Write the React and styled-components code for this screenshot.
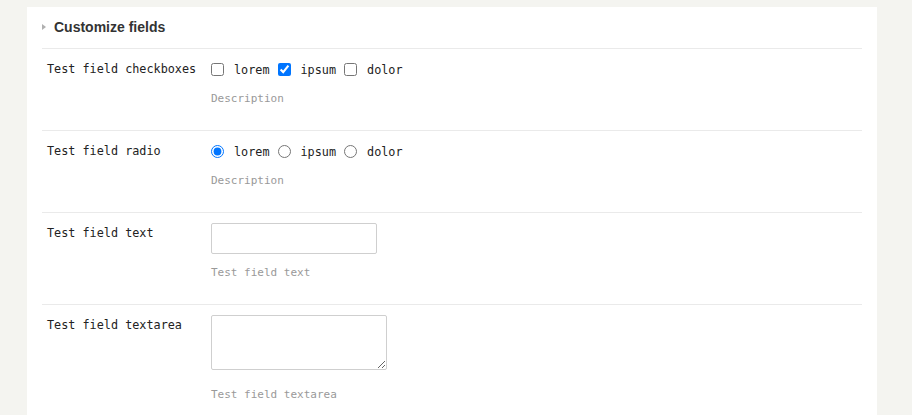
import React from "react";
import styled, { createGlobalStyle } from "styled-components";

const GlobalStyle = createGlobalStyle`
  body {
    margin: 0;
    background: #f4f4f0;
    font-family: "Liberation Sans", Arial, sans-serif;
  }
`;

const Page = styled.div`
  padding: 7px 35px 0 27px;
  height: 415px;
  box-sizing: border-box;
  overflow: hidden;
`;

const Panel = styled.div`
  background: #ffffff;
  padding: 0 15px;
  height: 100%;
`;

const Header = styled.div`
  display: flex;
  align-items: center;
  padding: 10px 0 11px;
  line-height: 20px;
`;

const Marker = styled.span`
  width: 0;
  height: 0;
  border-top: 3.5px solid transparent;
  border-bottom: 3.5px solid transparent;
  border-left: 4px solid #b0b0b0;
  margin-right: 8px;
`;

const Title = styled.h2`
  margin: 0;
  font-size: 14px;
  font-weight: bold;
  color: #333333;
`;

const Row = styled.div`
  display: flex;
  border-top: 1px solid #eaeaea;
  padding: 10px 0 23px 5px;
  font-family: "DejaVu Sans Mono", "Liberation Mono", monospace;
`;

const Label = styled.div`
  width: 164px;
  flex-shrink: 0;
  font-size: 11.8px;
  line-height: 20px;
  color: #222;
`;

const Control = styled.div`
  display: flex;
  flex-direction: column;
  align-items: flex-start;
`;

const Options = styled.div`
  display: flex;
  align-items: center;
  height: 21px;
  gap: 8px;
`;

const Option = styled.label`
  display: flex;
  align-items: center;
  gap: 10px;
  font-size: 11.8px;
  color: #222;

  input {
    margin: 0;
    width: 13px;
    height: 13px;
  }
`;

const Description = styled.div`
  margin-top: ${(p) => p.$gap || 11}px;
  font-size: 11px;
  line-height: 16px;
  color: #999999;
`;

const TextInput = styled.input`
  box-sizing: border-box;
  width: 166px;
  height: 31px;
  border: 1px solid #cfcfcf;
  border-radius: 2px;
  margin: 0;
`;

const TextArea = styled.textarea`
  display: block;
  box-sizing: border-box;
  width: 176px;
  height: 55px;
  border: 1px solid #cfcfcf;
  border-radius: 2px;
  margin: 0;
`;

const choices = ["lorem", "ipsum", "dolor"];

const App = () => (
  <>
    <GlobalStyle />
    <Page>
      <Panel>
        <Header>
          <Marker />
          <Title>Customize fields</Title>
        </Header>

        <Row>
          <Label>Test field checkboxes</Label>
          <Control>
            <Options>
              {choices.map((c) => (
                <Option key={c}>
                  <input type="checkbox" defaultChecked={c === "ipsum"} />
                  {c}
                </Option>
              ))}
            </Options>
            <Description>Description</Description>
          </Control>
        </Row>

        <Row>
          <Label>Test field radio</Label>
          <Control>
            <Options>
              {choices.map((c) => (
                <Option key={c}>
                  <input type="radio" name="radio" defaultChecked={c === "lorem"} />
                  {c}
                </Option>
              ))}
            </Options>
            <Description>Description</Description>
          </Control>
        </Row>

        <Row>
          <Label>Test field text</Label>
          <Control>
            <TextInput type="text" />
            <Description $gap={11}>Test field text</Description>
          </Control>
        </Row>

        <Row>
          <Label>Test field textarea</Label>
          <Control>
            <TextArea />
            <Description $gap={16.5}>Test field textarea</Description>
          </Control>
        </Row>
      </Panel>
    </Page>
  </>
);

export default App;
